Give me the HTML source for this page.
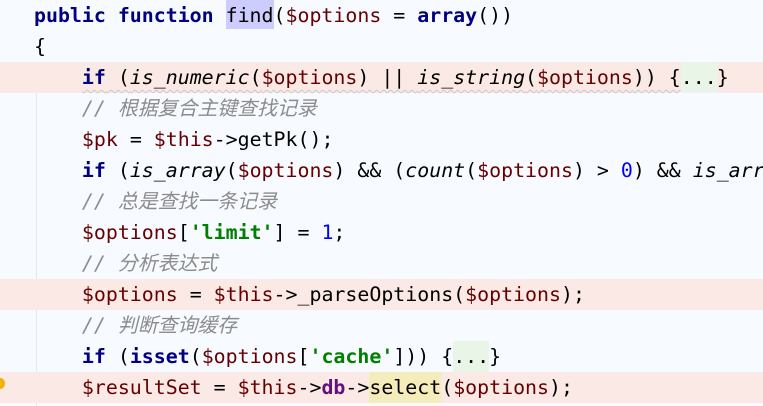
<!DOCTYPE html>
<html><head><meta charset="utf-8"><style>
html,body{margin:0;padding:0;}
body{width:763px;height:406px;background:#f7faff;position:relative;overflow:hidden;font-family:"DejaVu Sans Mono","Liberation Mono","Noto Sans CJK SC",monospace;font-size:19.9px;color:#000;}
.g{position:absolute;left:36px;top:62px;width:1px;height:344px;background:#e4e8ee;}
.l{position:absolute;left:0;width:763px;height:31px;line-height:31px;white-space:pre;}
.p{background:#fbe9e5;}
.t{position:absolute;left:34px;top:0;}
.k{color:#000080;font-weight:bold;}
.v{color:#660000;}
.c{color:#8c8c8c;font-style:italic;font-family:"DejaVu Sans Mono","Noto Sans CJK SC",monospace;}
.s{color:#008000;font-weight:bold;}
.n{color:#0000ff;}
.f{font-style:italic;}
.o{color:#660e7a;font-weight:bold;}
.fd{background:#e9f5e6;display:inline-block;height:31px;}
.u{text-decoration:underline wavy #c8c8c8;text-decoration-thickness:1px;text-underline-offset:5px;}
</style></head><body>
<div class="g"></div>
<div class="l" style="top:0"><span class="t"><span class="k">public function </span><span style="background:#ccccff;display:inline-block;height:29px">find</span>(<span class="v">$options</span> = <span class="k">array</span>())</span></div>
<div class="l" style="top:31px"><span class="t">{</span></div>
<div class="l p" style="top:62px"><span class="t">    <span class="u"><span class="k">if</span> (<span class="f">is_numeric</span>(<span class="v">$options</span>) || <span class="f">is_string</span>(<span class="v">$options</span>)) {</span><span class="fd">...</span>}</span></div>
<div class="l" style="top:93px"><span class="t">    <span class="c">// 根据复合主键查找记录</span></span></div>
<div class="l" style="top:124px"><span class="t">    <span class="v">$pk</span> = <span class="v">$this</span>-&gt;getPk();</span></div>
<div class="l" style="top:155px"><span class="t">    <span class="k">if</span> (<span class="f">is_array</span>(<span class="v">$options</span>) &amp;&amp; (<span class="f">count</span>(<span class="v">$options</span>) &gt; <span class="n">0</span>) &amp;&amp; <span class="f">is_array</span>(</span></div>
<div class="l" style="top:186px"><span class="t">    <span class="c">// 总是查找一条记录</span></span></div>
<div class="l" style="top:217px"><span class="t">    <span class="v">$options</span>[<span class="s">'limit'</span>] = <span class="n">1</span>;</span></div>
<div class="l" style="top:248px"><span class="t">    <span class="c">// 分析表达式</span></span></div>
<div class="l p" style="top:279px"><span class="t">    <span class="v">$options</span> = <span class="v">$this</span>-&gt;_parseOptions(<span class="v">$options</span>);</span></div>
<div class="l" style="top:310px"><span class="t">    <span class="c">// 判断查询缓存</span></span></div>
<div class="l" style="top:341px"><span class="t">    <span class="k">if</span> (<span class="k">isset</span>(<span class="v">$options</span>[<span class="s">'cache'</span>])) {<span class="fd">...</span>}</span></div>
<div class="l p" style="top:372px"><span class="t">    <span class="v">$resultSet</span> = <span class="v">$this</span>-&gt;<span class="o">db</span>-&gt;<span style="background:#f5ecbb;display:inline-block;height:31px">select</span>(<span class="v">$options</span>);</span></div>
<div style="position:absolute;left:-4px;top:378px;width:9px;height:11px;border-radius:50%;background:#f0b400;"></div>
</body></html>
